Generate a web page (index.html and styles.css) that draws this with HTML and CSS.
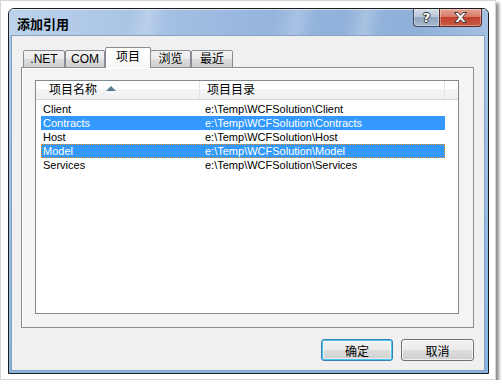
FILE: index.html
```html
<!DOCTYPE html>
<html lang="zh-CN">
<head>
    <meta charset="UTF-8">
    <title>添加引用</title>
    <link rel="stylesheet" href="styles.css">
</head>
<body>

    <!-- 截图外框 -->
    <div class="frame">
        <div class="window">

            <!-- 标题栏 -->
            <div class="titlebar">
                <span class="title">添加引用</span>
                <div class="caption-buttons">
                    <button class="cap-btn help">?</button>
                    <button class="cap-btn close">
                        <svg width="13" height="11" viewBox="0 0 13 11">
                            <polygon points="0.5,0.5 4,0.5 6.5,3.3 9,0.5 12.5,0.5 8.3,5.5 12.5,10.5 9,10.5 6.5,7.7 4,10.5 0.5,10.5 4.7,5.5" fill="#fff" stroke="#3a3a3a" stroke-width="1"/>
                        </svg>
                    </button>
                </div>
            </div>

            <div class="body">
                <div class="client">
                    <div class="tabs">
                        <div class="tab t-net">.NET</div>
                        <div class="tab t-com">COM</div>
                        <div class="tab t-proj selected">项目</div>
                        <div class="tab t-browse">浏览</div>
                        <div class="tab t-recent">最近</div>
                    </div>

                    <div class="pane">
                        <div class="listview">
                            <div class="lv-header">
                                <div class="col col-name">项目名称<span class="sort-arrow"></span></div>
                                <div class="col col-path">项目目录</div>
                                <div class="col col-rest"></div>
                            </div>
                            <div class="lv-rows">
                                <div class="row"><span class="cell name">Client</span><span class="cell">e:\Temp\WCFSolution\Client</span></div>
                                <div class="row selected"><span class="cell name">Contracts</span><span class="cell">e:\Temp\WCFSolution\Contracts</span></div>
                                <div class="row"><span class="cell name">Host</span><span class="cell">e:\Temp\WCFSolution\Host</span></div>
                                <div class="row selected focus"><span class="cell name">Model</span><span class="cell">e:\Temp\WCFSolution\Model</span></div>
                                <div class="row"><span class="cell name">Services</span><span class="cell">e:\Temp\WCFSolution\Services</span></div>
                            </div>
                        </div>
                    </div>

                    <div class="buttons">
                        <button class="btn ok">确定</button>
                        <button class="btn cancel">取消</button>
                    </div>
                </div>
            </div>
        </div>
    </div>

</body>
</html>
```

FILE: styles.css
```css
html, body {
    margin: 0;
    padding: 0;
    background: #fff;
}

body {
    font-family: "Liberation Sans", "Noto Sans CJK SC", sans-serif;
    font-size: 11px;
    color: #000;
}

/* 外框和阴影 */
.frame {
    width: 496px;
    height: 380px;
    box-sizing: border-box;
    border: 1px solid #d6d6d6;
    padding: 7px;
    background: #fff;
    box-shadow: 3px 3px 3px rgba(0, 0, 0, 0.45);
}

.window {
    width: 481px;
    height: 366px;
    box-sizing: border-box;
    border: 1px solid #1c1c1c;
    border-radius: 6px 6px 0 0;
    overflow: hidden;
    display: flex;
    flex-direction: column;
    background: linear-gradient(#a9c5e6, #86b5e2);
}

/* 标题栏 */
.titlebar {
    height: 26px;
    flex: none;
    display: flex;
    align-items: flex-start;
    box-shadow: inset 0 1px 0 rgba(255, 255, 255, 0.6);
    background:
        linear-gradient(100deg, transparent 0 25%, rgba(255, 255, 255, 0.22) 29%, transparent 33%,
            transparent 55%, rgba(255, 255, 255, 0.2) 60%, transparent 64%,
            transparent 70%, rgba(255, 255, 255, 0.22) 74%, transparent 78%),
        linear-gradient(to right, #bdd3ec 0%, #a7c2e4 28%, #93b3dc 58%, #8fb0d9 85%, #a4c0e2 100%);
}

.title {
    font-family: "Noto Sans CJK SC", sans-serif;
    font-size: 13px;
    font-weight: bold;
    line-height: 26px;
    padding-left: 8px;
    margin-top: 2px;
    color: #000;
}

.caption-buttons {
    margin-left: auto;
    margin-right: 6px;
    display: flex;
}

.cap-btn {
    height: 18px;
    padding: 0;
    margin: 0;
    border: 1px solid #3d4b61;
    border-top: none;
    display: flex;
    align-items: center;
    justify-content: center;
    box-shadow: inset 0 0 0 1px rgba(255, 255, 255, 0.35);
}

.cap-btn.help {
    width: 26px;
    border-right: none;
    border-radius: 0 0 0 4px;
    background: linear-gradient(#d2dde9 0%, #b8c7d9 45%, #90a6c0 50%, #a6bad0 100%);
    font-family: "DejaVu Sans", sans-serif;
    font-weight: bold;
    font-size: 13px;
    color: #fff;
    text-shadow: 1px 0 0 #333, -1px 0 0 #333, 0 1px 0 #333, 0 -1px 0 #333;
}

.cap-btn.close {
    width: 43px;
    border-color: #5b2a24;
    border-radius: 0 0 4px 0;
    background: linear-gradient(#e6a597 0%, #d77a68 45%, #c0402e 50%, #c95a40 100%);
}

/* 对话框主体 */
.body {
    flex: 1;
    display: flex;
    padding: 0 3px 2px 2px;
}

.client {
    flex: 1;
    border: 1px solid #8ba2bf;
    background: #f0f0f0;
    padding: 11px 10px 0 9px;
}

/* 选项卡 */
.tabs {
    display: flex;
    align-items: flex-end;
    height: 21px;
    padding-left: 2px;
    margin-bottom: -1px;
    position: relative;
    z-index: 1;
}

.tab {
    height: 18px;
    box-sizing: border-box;
    border: 1px solid #898c95;
    border-radius: 2px 2px 0 0;
    background: linear-gradient(#f2f2f2 0%, #ebebeb 50%, #dddddd 51%, #cfcfcf 100%);
    font-size: 12px;
    line-height: 16px;
    text-align: center;
}

.t-net { width: 42px; }
.t-com { width: 40px; }
.t-proj { width: 46px; }
.t-browse { width: 41px; margin-left: -1px; }
.t-recent { width: 42px; }

.tab.selected {
    height: 21px;
    border-bottom: none;
    background: linear-gradient(#ffffff, #f7f7f7);
    line-height: 19px;
}

.pane {
    height: 261px;
    box-sizing: border-box;
    border: 1px solid #898c95;
    background: #f4f4f4;
    box-shadow: inset 1px 1px 0 #fff;
    padding: 12px 0 0 13px;
}

/* 列表 */
.listview {
    width: 424px;
    height: 234px;
    box-sizing: border-box;
    border: 1px solid #828790;
    background: #fff;
}

.lv-header {
    display: flex;
    height: 19px;
    box-sizing: border-box;
    border-bottom: 1px solid #d5d5d5;
    background: linear-gradient(#ffffff 0%, #ffffff 45%, #f3f4f6 46%, #eff0f2 100%);
}

.col {
    box-sizing: border-box;
    font-size: 12px;
    line-height: 18px;
    white-space: nowrap;
}

.col-name {
    width: 164px;
    padding-left: 13px;
    border-right: 1px solid #e3e5e7;
}

.col-path {
    width: 245px;
    padding-left: 7px;
    border-right: 1px solid #e3e5e7;
}

.col-rest {
    flex: 1;
}

.sort-arrow {
    display: inline-block;
    width: 0;
    height: 0;
    margin-left: 9px;
    vertical-align: 3px;
    border-left: 5px solid transparent;
    border-right: 5px solid transparent;
    border-bottom: 5px solid #5a7d8d;
}

.lv-rows {
    margin-top: 2px;
}

.row {
    display: flex;
    width: 404px;
    height: 14px;
    margin-left: 5px;
    box-sizing: border-box;
    line-height: 14px;
    white-space: nowrap;
}

.cell.name {
    width: 164px;
    padding-left: 2px;
    box-sizing: border-box;
}

.row.selected {
    background: #3399ff;
    color: #fff;
}

.row.focus {
    outline: 1px dotted #e48a28;
    outline-offset: -1px;
}

/* 底部按钮 */
.buttons {
    display: flex;
    justify-content: flex-end;
    gap: 8px;
    margin-top: 11px;
}

.btn {
    height: 22px;
    padding: 0;
    border: 1px solid #707070;
    border-radius: 3px;
    background: linear-gradient(#f2f2f2 0%, #ebebeb 50%, #dddddd 51%, #cfcfcf 100%);
    box-shadow: inset 0 0 0 1px rgba(255, 255, 255, 0.7);
    font-family: "Noto Sans CJK SC", sans-serif;
    font-size: 12px;
    color: #000;
}

.btn.ok {
    width: 72px;
    border-color: #3c7fb1;
    box-shadow: inset 0 0 0 1px #48c4f0, inset 0 0 0 2px rgba(255, 255, 255, 0.5);
}

.btn.cancel {
    width: 73px;
}
```
